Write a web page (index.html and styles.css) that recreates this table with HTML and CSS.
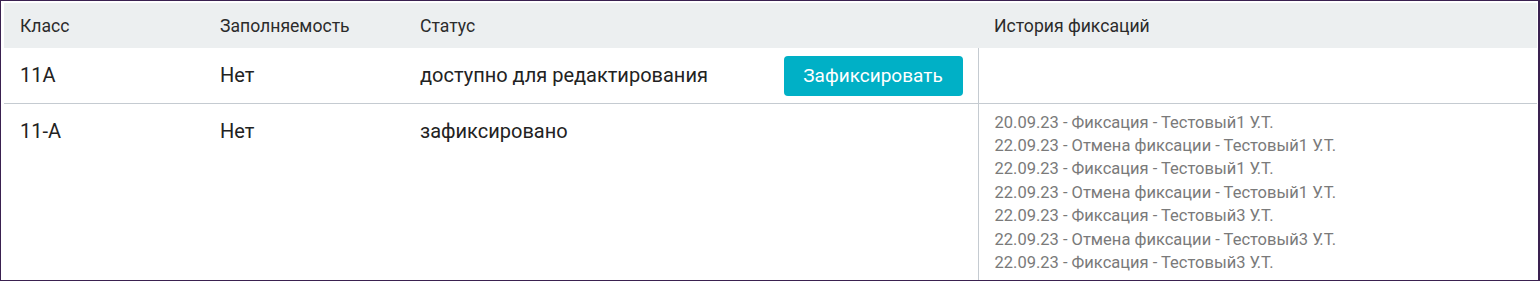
FILE: index.html
```html
<!DOCTYPE html>
<html lang="ru">
<head>
  <meta charset="UTF-8">
  <title>Фиксация классов</title>
  <link rel="stylesheet" href="styles.css">
</head>
<body>
  <div class="frame">
    <table class="classes">
      <thead>
        <tr>
          <th class="col-class">Класс</th>
          <th class="col-fill">Заполняемость</th>
          <th class="col-status">Статус</th>
          <th class="col-history">История фиксаций</th>
        </tr>
      </thead>
      <tbody>
        <tr>
          <td>11А</td>
          <td>Нет</td>
          <td class="status">
            <div class="status-cell">
              <span>доступно для редактирования</span>
              <button class="btn-fix">Зафиксировать</button>
            </div>
          </td>
          <td class="history"></td>
        </tr>
        <tr>
          <td>11-А</td>
          <td>Нет</td>
          <td class="status">зафиксировано</td>
          <td class="history">
            <ul class="history-list">
              <li>20.09.23 - Фиксация - Тестовый1 У.Т.</li>
              <li>22.09.23 - Отмена фиксации - Тестовый1 У.Т.</li>
              <li>22.09.23 - Фиксация - Тестовый1 У.Т.</li>
              <li>22.09.23 - Отмена фиксации - Тестовый1 У.Т.</li>
              <li>22.09.23 - Фиксация - Тестовый3 У.Т.</li>
              <li>22.09.23 - Отмена фиксации - Тестовый3 У.Т.</li>
              <li>22.09.23 - Фиксация - Тестовый3 У.Т.</li>
            </ul>
          </td>
        </tr>
      </tbody>
    </table>
  </div>
</body>
</html>
```

FILE: styles.css
```css
html, body {
  margin: 0;
  background: #fff;
}
body {
  font-family: Roboto, "Noto Sans", Arial, sans-serif;
  color: #222;
}
.frame {
  height: 281px;
  box-sizing: border-box;
  border: 1px solid #3a2150;
  border-right-width: 2px;
  padding: 2px 1px 0 3px;
  overflow: hidden;
}
.classes {
  width: 100%;
  border-collapse: collapse;
  table-layout: fixed;
}
.classes th {
  background: #eceff0;
  font-weight: 400;
  font-size: 17.6px;
  color: #2b2b2b;
  text-align: left;
  height: 45px;
  padding: 0 16px;
  box-sizing: border-box;
}
.col-class, .col-fill {
  width: 200px;
}
.col-status {
  width: 574px;
}
.classes td {
  font-size: 20px;
  padding: 0 16px;
  vertical-align: top;
  border-bottom: 1px solid #c5cbd1;
}
.classes tbody tr:first-child td {
  height: 55px;
  vertical-align: middle;
  box-sizing: border-box;
}
.classes tbody tr:nth-child(2) td {
  padding-top: 15px;
  padding-bottom: 20px;
  border-bottom: none;
}
.status-cell {
  display: flex;
  align-items: center;
  justify-content: space-between;
}
.btn-fix {
  background: #00b0c6;
  color: #fff;
  border: none;
  border-radius: 4px;
  font-family: inherit;
  font-size: 19px;
  width: 179px;
  height: 40px;
  margin: 1px -1px 0 0;
  cursor: pointer;
}
.classes td.history {
  border-left: 1px solid #c5cbd1;
}
.classes tbody tr:nth-child(2) td.history {
  padding-top: 7px;
}
.history-list {
  list-style: none;
  margin: 0;
  padding: 0;
  font-size: 16.5px;
  line-height: 23.4px;
  color: #7a7a7a;
}
```
